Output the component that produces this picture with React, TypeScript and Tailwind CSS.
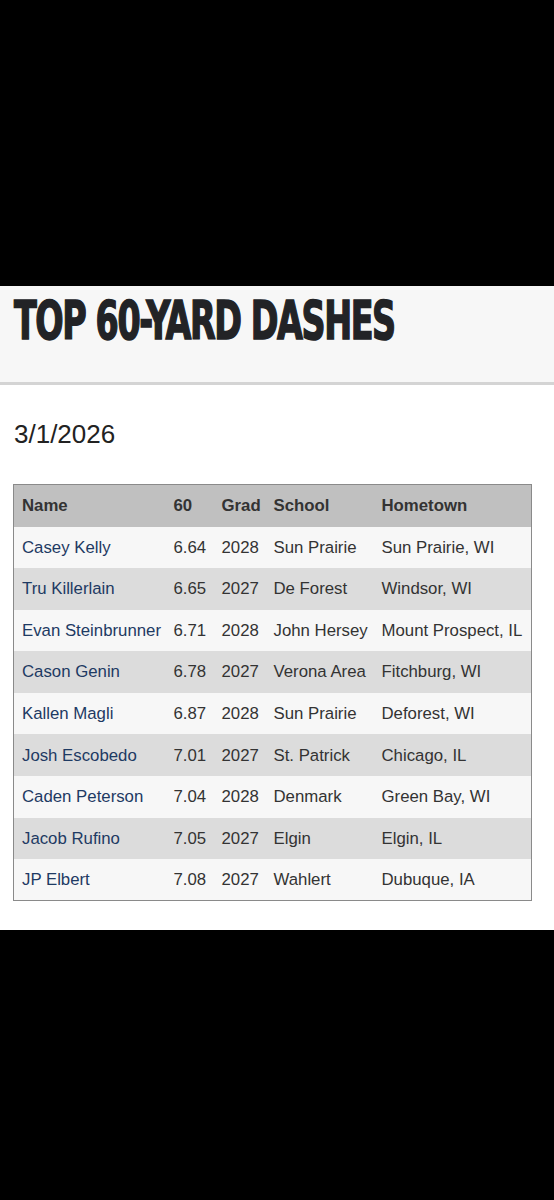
const rows = [
  { name: "Casey Kelly", time: "6.64", grad: "2028", school: "Sun Prairie", town: "Sun Prairie, WI" },
  { name: "Tru Killerlain", time: "6.65", grad: "2027", school: "De Forest", town: "Windsor, WI" },
  { name: "Evan Steinbrunner", time: "6.71", grad: "2028", school: "John Hersey", town: "Mount Prospect, IL" },
  { name: "Cason Genin", time: "6.78", grad: "2027", school: "Verona Area", town: "Fitchburg, WI" },
  { name: "Kallen Magli", time: "6.87", grad: "2028", school: "Sun Prairie", town: "Deforest, WI" },
  { name: "Josh Escobedo", time: "7.01", grad: "2027", school: "St. Patrick", town: "Chicago, IL" },
  { name: "Caden Peterson", time: "7.04", grad: "2028", school: "Denmark", town: "Green Bay, WI" },
  { name: "Jacob Rufino", time: "7.05", grad: "2027", school: "Elgin", town: "Elgin, IL" },
  { name: "JP Elbert", time: "7.08", grad: "2027", school: "Wahlert", town: "Dubuque, IA" },
];

export default function App() {
  return (
    <div className="w-[554px] min-h-[1200px] bg-black font-['Liberation_Sans',Arial,sans-serif]">
      <div className="h-[286px]" />

      {/* Page header */}
      <div className="h-[99px] bg-[#f7f7f7] border-b-[3px] border-[#d4d4d4] px-[14px] pt-[7px]">
        <h1 className="font-['DejaVu_Sans_Condensed',sans-serif] font-bold text-[53px] leading-[56px] tracking-[-2px] text-[#222326] [-webkit-text-stroke:1.5px_#222326] origin-left scale-x-[0.7] whitespace-nowrap">
          TOP 60-YARD DASHES
        </h1>
      </div>

      <div className="bg-white h-[545px] px-[13px] pt-[34px]">
        <div className="text-[26px] leading-[30px] text-[#222] pl-px">3/1/2026</div>

        <table className="mt-[35px] w-[519px] table-fixed border-collapse border border-[#8a8a8a] text-[16.8px] text-[#333]">
          <colgroup>
            <col className="w-[152px]" />
            <col className="w-[48px]" />
            <col className="w-[52px]" />
            <col className="w-[108px]" />
            <col />
          </colgroup>
          <thead>
            <tr className="h-[42px] bg-[#c0c0c0] text-left">
              <th className="pl-[8px] font-bold">Name</th>
              <th className="pl-[8px] font-bold">60</th>
              <th className="pl-[8px] font-bold">Grad</th>
              <th className="pl-[8px] font-bold">School</th>
              <th className="pl-[8px] font-bold">Hometown</th>
            </tr>
          </thead>
          <tbody>
            {rows.map((r, i) => (
              <tr
                key={r.name}
                className={`h-[41.6px] ${i % 2 === 0 ? "bg-[#f7f7f7]" : "bg-[#dcdcdc]"}`}
              >
                <td className="pl-[8px] text-[#1e3a63] whitespace-nowrap">{r.name}</td>
                <td className="pl-[8px]">{r.time}</td>
                <td className="pl-[8px]">{r.grad}</td>
                <td className="pl-[8px] whitespace-nowrap">{r.school}</td>
                <td className="pl-[8px] whitespace-nowrap">{r.town}</td>
              </tr>
            ))}
          </tbody>
        </table>
      </div>
    </div>
  );
}
